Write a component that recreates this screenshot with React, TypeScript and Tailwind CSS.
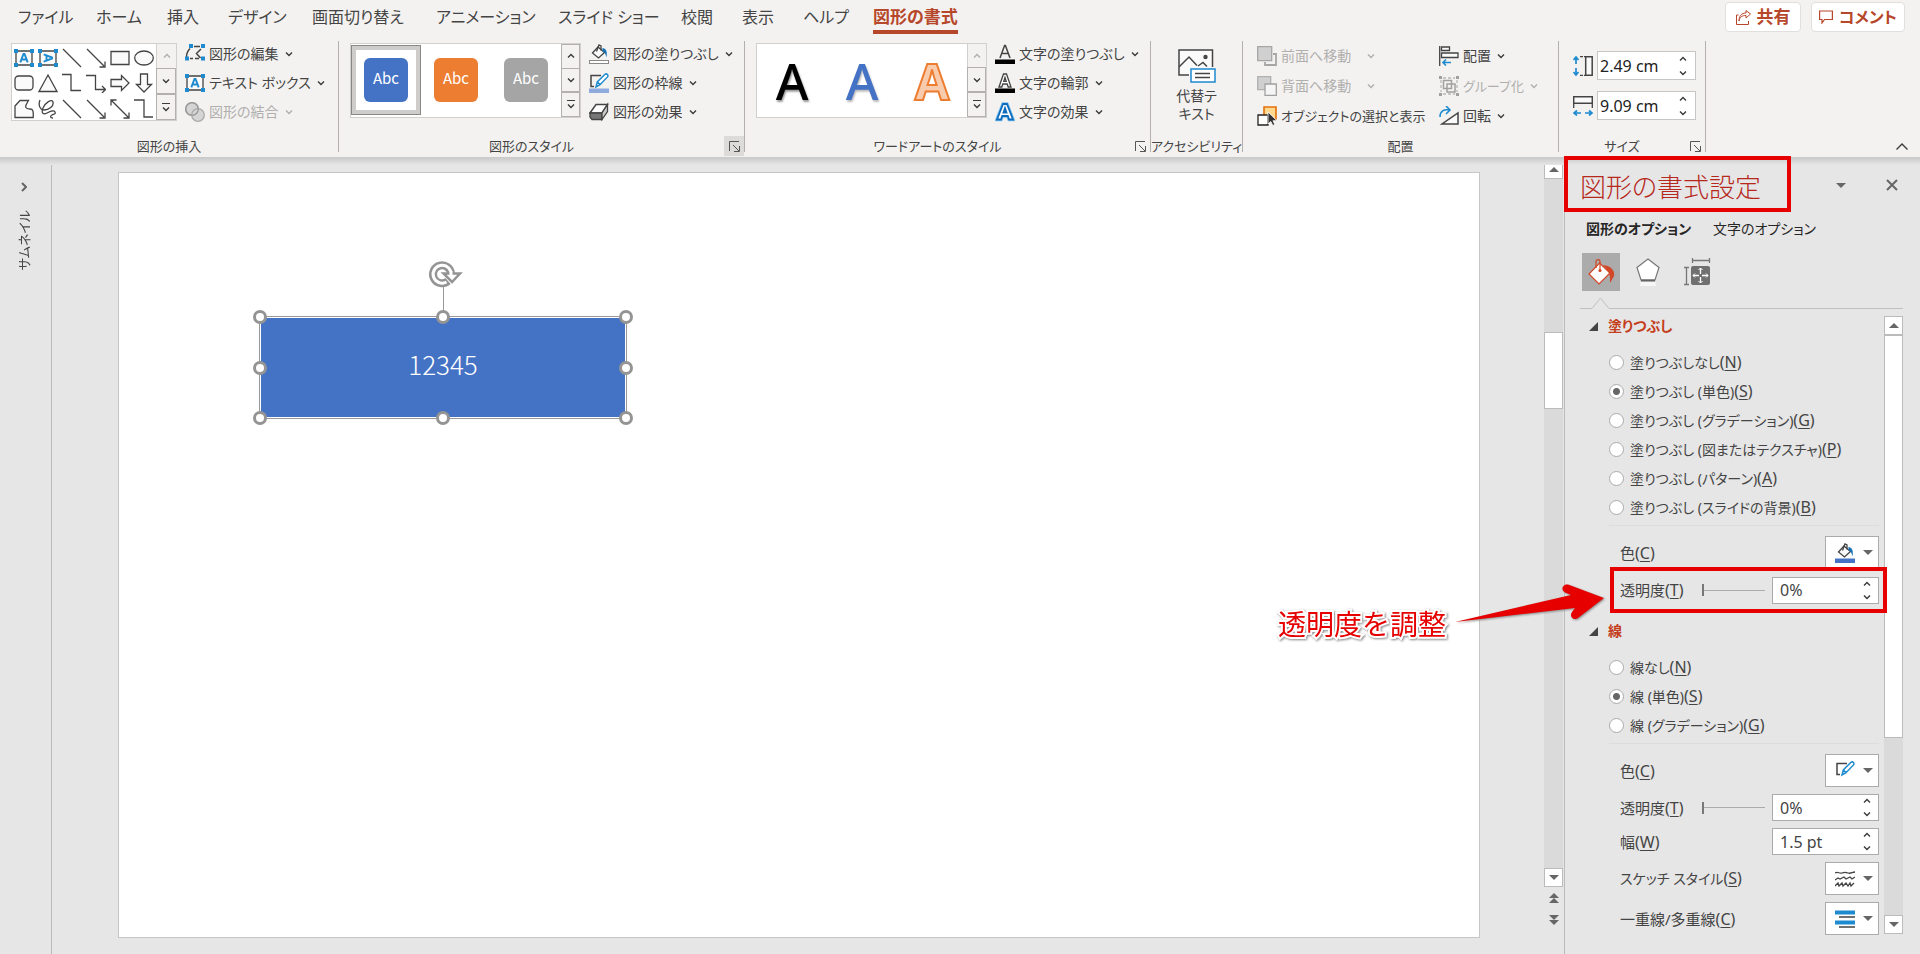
import { useState, type ReactNode } from "react";
import clsx from "clsx";

const TABS = [
  { label: "ファイル", width: "w-[78px]" },
  { label: "ホーム", width: "w-[71px]" },
  { label: "挿入", width: "w-[61px]" },
  { label: "デザイン", width: "w-[84px]" },
  { label: "画面切り替え", width: "w-[124px]" },
  { label: "アニメーション", width: "w-[122px]" },
  { label: "スライド ショー", width: "w-[123px]" },
  { label: "校閲", width: "w-[61px]" },
  { label: "表示", width: "w-[61px]" },
  { label: "ヘルプ", width: "w-[70px]" },
];

const FILL_OPTIONS = [
  { label: "塗りつぶしなし", accessKey: "N" },
  { label: "塗りつぶし (単色)", accessKey: "S" },
  { label: "塗りつぶし (グラデーション)", accessKey: "G" },
  { label: "塗りつぶし (図またはテクスチャ)", accessKey: "P" },
  { label: "塗りつぶし (パターン)", accessKey: "A" },
  { label: "塗りつぶし (スライドの背景)", accessKey: "B" },
];

const LINE_OPTIONS = [
  { label: "線なし", accessKey: "N" },
  { label: "線 (単色)", accessKey: "S" },
  { label: "線 (グラデーション)", accessKey: "G" },
];

/* ---------- icons ---------- */

function Svg({ size = 20, children }: { size?: number; children: ReactNode }) {
  return (
    <svg
      width={size}
      height={size}
      viewBox="0 0 20 20"
      fill="none"
      stroke="#444"
      strokeWidth="1.3"
      className="shrink-0"
      aria-hidden="true"
    >
      {children}
    </svg>
  );
}

function Chevron({ up, dim }: { up?: boolean; dim?: boolean }) {
  return (
    <svg
      width="8"
      height="6"
      viewBox="0 0 8 6"
      fill="none"
      stroke={dim ? "#b1afad" : "#3b3a39"}
      strokeWidth="1.4"
      className="shrink-0"
      aria-hidden="true"
    >
      <path d={up ? "M1 4.5l3-3 3 3" : "M1 1.5l3 3 3-3"} />
    </svg>
  );
}

function Triangle({ up }: { up?: boolean }) {
  return (
    <svg width="10" height="5" viewBox="0 0 10 5" fill="#666" aria-hidden="true">
      <path d={up ? "M0 5l5-5 5 5z" : "M0 0h10L5 5z"} />
    </svg>
  );
}

function TextBoxIcon({ vertical }: { vertical?: boolean }) {
  return (
    <Svg>
      <path d="M2 3h16v14H2z" fill="#fafafa" />
      <g stroke="none" fill="#1e8bd0">
        <path d="M0 1h4v4H0zM16 1h4v4h-4zM0 15h4v4H0zM16 15h4v4h-4z" />
      </g>
      <g transform={vertical ? "rotate(90 10 10)" : undefined} stroke="#1e8bd0" strokeWidth="1.9">
        <path d="M6.3 14.3L9.5 6h1l3.2 8.3M7.6 11.5h4.8" />
      </g>
    </Svg>
  );
}

function EditPointsIcon() {
  return (
    <Svg>
      <path d="M1.5 13C1.500 9 2.500 7 5 4.500M9 2.500h6M16 5l-4.500 4.500L15.500 14M5 14.500h3M10 14.500h4" strokeWidth="1.500" />
      <path d="M4 0h4v4H4zM16 0h4v4h-4zM0 12.500h4v4H0zM16 12.500h4v4h-4z" fill="#1e8bd0" stroke="none" />
    </Svg>
  );
}

function MergeIcon() {
  return (
    <Svg>
      <circle cx="7" cy="7" r="6.3" stroke="#aaa" fill="#d5d5d5" />
      <circle cx="13" cy="13" r="6.3" stroke="#aaa" fill="#d5d5d5" />
      <circle cx="7" cy="7" r="6.3" stroke="#999" />
    </Svg>
  );
}

function BucketIcon({ color }: { color: string }) {
  return (
    <Svg>
      <path d="M9 3l6.5 5.5-6 5.5-6-5z" fill="#fafafa" />
      <path d="M7.5 7.5L10 1l2 1v4.5" />
      <path d="M13.500 4c4 .5 5 4 4 9.500-1-4-2-6-4-6z" fill="#1673b8" stroke="none" />
      <rect
        x={color === "white" ? 0.5 : 0}
        y={color === "white" ? 16.5 : 15.5}
        width={color === "white" ? 19 : 20}
        height={color === "white" ? 3 : 4.5}
        fill={color}
        stroke={color === "white" ? "#8a8886" : "none"}
        strokeWidth="1"
      />
    </Svg>
  );
}

function PenIcon({ color }: { color?: string }) {
  return (
    <Svg>
      <path d="M12 2.500H2v11h3" strokeWidth="1.500" />
      <path d="M7 14l1.300-5L16 1.300c1.800-1.200 3.700.8 2.500 2.600L11 11.700zM8.500 9l2.800 2.800" stroke="#1e8bd0" strokeWidth="1.500" fill="#fff" />
      {color && <path d="M0 15.500h20v4.500H0z" fill={color} stroke="none" />}
    </Svg>
  );
}

function EffectsIcon() {
  return (
    <Svg>
      <path d="M7 2.500h11.500L13 11H1z" fill="#fff" strokeWidth="1.500" />
      <path d="M1 11h12v6.500H3L1 15z" fill="#777" />
      <path d="M18.500 2.500v7l-5.500 8V11z" fill="#ccc" />
    </Svg>
  );
}

function LetterIcon({ kind }: { kind: "fill" | "outline" | "effect" }) {
  if (kind === "effect") {
    return (
      <Svg>
        <path d="M2 17.500L8 2h4l6 15.500h-4l-1.200-3.500H7.200L6 17.500zM8.500 10.500h3L10 6z" stroke="#83c3ee" strokeWidth="3.500" />
        <path d="M2 17.500L8 2h4l6 15.500h-4l-1.200-3.500H7.200L6 17.500zM8.500 10.500h3L10 6z" fill="#fff" stroke="#0f6cbd" strokeWidth="1.800" />
      </Svg>
    );
  }
  return (
    <Svg>
      {kind === "fill" ? (
        <path d="M5 14L9.600 1.500h.8L15 14M6.800 9.500h6.400" strokeWidth="1.500" />
      ) : (
        <path d="M4 14L8.500 1h3L16 14h-2.800l-1-3H7.800l-1 3zM8.800 8.300h2.400L10 4.500z" strokeWidth="1.300" fill="#fff" />
      )}
      <path d="M0 15.500h20v4.500H0z" fill="#000" stroke="none" />
    </Svg>
  );
}

function AltTextIcon() {
  return (
    <svg width="38" height="34" viewBox="0 0 38 34" fill="none" stroke="#444" strokeWidth="1.500" aria-hidden="true">
      <path d="M34.500 18V1H1v25h10" fill="#fafafa" />
      <path d="M1 18L11 8l8 8.500M20 17l5-3.500 4 4" />
      <circle cx="27.500" cy="8" r="2.200" fill="#444" stroke="none" />
      <path d="M13 20h24v13H13z" fill="#fff" stroke="#1e8bd0" />
      <path d="M17 24.500h15M17 28.500h15" strokeWidth="1.300" />
    </svg>
  );
}

function ForwardIcon() {
  return (
    <Svg>
      <path d="M16 8h3v11H8v-3" stroke="#a6a6a6" strokeWidth="1.800" />
      <path d="M.7.7h14v14H.7z" fill="#d0d0d0" stroke="#a6a6a6" />
    </Svg>
  );
}

function BackwardIcon() {
  return (
    <Svg>
      <path d="M.7.7h13v13H.7z" fill="#d0d0d0" stroke="#b0b0b0" />
      <path d="M8 8h11.300v11.300H8z" fill="#f5f5f5" stroke="#a0a0a0" />
    </Svg>
  );
}

function SelectionIcon() {
  return (
    <Svg>
      <path d="M7 1h12v12H7z" fill="#ffd890" stroke="#e2710a" strokeWidth="1.600" />
      <path d="M1 9h10v10H1z" fill="#fff" stroke="#222" />
      <path d="M11 6v12l2.800-2.500 2 4 2-1-1.800-3.800H20z" fill="#333" stroke="#fff" strokeWidth=".8" />
    </Svg>
  );
}

function AlignIcon() {
  return (
    <Svg>
      <path d="M.7 0v20" />
      <path d="M2.500 1h8v3.500h-8zM2.500 7h16.500v4.500H2.500z" fill="#fafafa" />
      <path d="M12 16.500H4M7 13.500l-3 3 3 3" stroke="#1e8bd0" strokeWidth="1.600" />
    </Svg>
  );
}

function GroupIcon() {
  return (
    <Svg>
      <path d="M2 4v12M18 4v12M4 2h12M4 18h12" stroke="#b8b8b8" strokeDasharray="3 2" />
      <path d="M4.500 4.500h8v8h-8zM8 8h8v8H8z" stroke="#a0a0a0" strokeWidth="1.500" />
      <path d="M0 0h3v3H0zM17 0h3v3h-3zM0 17h3v3H0zM17 17h3v3h-3z" fill="#a0a0a0" stroke="none" />
    </Svg>
  );
}

function RotateIcon() {
  return (
    <Svg>
      <path d="M1 11c0-6 4-8 9-7M7 0l4 4-4 4" stroke="#1e8bd0" strokeWidth="1.600" />
      <path d="M19 7v11H3z" fill="#fafafa" strokeWidth="1.500" />
    </Svg>
  );
}

function HeightIcon() {
  return (
    <Svg>
      <path d="M7 .700h5M7 19.300h5" strokeDasharray="3 1" />
      <path d="M12.700.700h6.500v18.600h-6.500z" fill="#fafafa" strokeWidth="1.500" />
      <path d="M3 1v7M3 12v7M.500 4L3 1l2.500 3M.500 16L3 19l2.500-3" stroke="#1e8bd0" strokeWidth="1.700" />
    </Svg>
  );
}

function WidthIcon() {
  return (
    <Svg>
      <path d="M.700.700h18.600v6.500H.700z" fill="#fafafa" strokeWidth="1.500" />
      <path d="M.700 8v4M19.300 8v4" />
      <path d="M1 17h7M12 17h7M4 14.500L1 17l3 2.500M16 14.500l3 2.500-3 2.500" stroke="#1e8bd0" strokeWidth="1.700" />
    </Svg>
  );
}

function LauncherIcon() {
  return (
    <svg width="11" height="11" viewBox="0 0 11 11" fill="none" stroke="#555" aria-hidden="true">
      <path d="M10 .500H.500V10M4 4l6 6M10.500 5v5.500H5" />
    </svg>
  );
}

// The 18 entries of the shapes gallery, row by row.
const SHAPES: ReactNode[] = [
  <TextBoxIcon />,
  <TextBoxIcon vertical />,
  <Svg><path d="M1 1l18 18" /></Svg>,
  <Svg><path d="M1 1l17 17M19 13.500V19h-5.500" /></Svg>,
  <Svg><path d="M1 3.500h18v13H1z" fill="#fafafa" /></Svg>,
  <Svg><ellipse cx="10" cy="10" rx="9.300" ry="7" fill="#fafafa" /></Svg>,
  <Svg><rect x="1" y="3" width="18" height="14" rx="3.500" fill="#fafafa" /></Svg>,
  <Svg><path d="M10 2l9 16.500H1z" fill="#fafafa" /></Svg>,
  <Svg><path d="M0 1.500h9v16h10" /></Svg>,
  <Svg><path d="M0 2.500h9.500v14H19M16 13l3.500 3.500L16 20" /></Svg>,
  <Svg><path d="M1 6.500h10.500v-4L19 10l-7.500 7.500v-4H1z" fill="#fafafa" /></Svg>,
  <Svg><path d="M6.500 1v10.500h-4L10 19l7.500-7.500h-4V1z" fill="#fafafa" /></Svg>,
  <Svg><path d="M1 7l5-5.500h8.500L12 6c-1 3 1 4 4 4s3.500 2 3.200 8.500H1z" fill="#fafafa" /></Svg>,
  <Svg><path d="M2 1C0 6 2 11 6 11c5 0 10-4 9-8s-8 1-10 6 0 7 4 5 7-3 8-1-1 2-3 3-2 3 1 3" /></Svg>,
  <Svg><path d="M1 1l18 18" /></Svg>,
  <Svg><path d="M1 1l17 17M19 13.500V19h-5.500" /></Svg>,
  <Svg><path d="M1 1l18 18M19 13.500V19h-5.500M1 6.500V1h5.500" /></Svg>,
  <Svg><path d="M0 1h10v17h9" /></Svg>,
];

/* ---------- ribbon ---------- */

function RibbonGroup({
  label,
  width,
  launcher,
  active,
  children,
}: {
  label: string;
  width: string;
  launcher?: boolean;
  active?: boolean;
  children: ReactNode;
}) {
  return (
    <section
      aria-label={label}
      className={clsx("flex h-[111px] shrink-0 flex-col border-r border-[#b3b0ad]", width)}
    >
      <div className="flex flex-1">{children}</div>
      <div className="flex h-3 items-center">
        <span className="flex-1 whitespace-nowrap text-center text-[13px]">{label}</span>
        {launcher && (
          <button
            type="button"
            aria-label={`${label}の詳細`}
            className={clsx("flex size-5 items-center justify-center", active && "bg-[#dcdbda]")}
          >
            <LauncherIcon />
          </button>
        )}
      </div>
    </section>
  );
}

function RibbonButton({
  icon,
  label,
  disabled,
  menu = true,
  wide,
  tall,
  small,
}: {
  icon: ReactNode;
  label: string;
  disabled?: boolean;
  menu?: boolean;
  wide?: boolean;
  tall?: boolean;
  small?: boolean;
}) {
  return (
    <button
      type="button"
      disabled={disabled}
      className={clsx(
        "flex items-center gap-1 whitespace-nowrap disabled:text-[#b1afad]",
        tall ? "h-[30px]" : "h-[29px]",
        small ? "text-[13px]" : "text-sm",
      )}
    >
      {icon}
      <span>{label}</span>
      {menu && (
        <span className={wide ? "ml-3" : "ml-0.5"}>
          <Chevron dim={disabled} />
        </span>
      )}
    </button>
  );
}

function GalleryScroll({ topDim }: { topDim?: boolean }) {
  const cell = "flex flex-1 items-center justify-center border-[#b3b0ad] bg-[#f3f2f1]";
  return (
    <div className="flex w-5 flex-col">
      <button
        type="button"
        aria-label="前の行"
        className={clsx(cell, "border-l", topDim ? "border-[#d2d0ce]" : "border-r border-t")}
      >
        <Chevron up dim={topDim} />
      </button>
      <button type="button" aria-label="次の行" className={clsx(cell, "border")}>
        <Chevron />
      </button>
      <button type="button" aria-label="その他" className={clsx(cell, "flex-col gap-0.5 border")}>
        <span className="h-px w-2 bg-[#3b3a39]" />
        <Chevron />
      </button>
    </div>
  );
}

function StyleSwatch({ color, selected }: { color: string; selected?: boolean }) {
  return (
    <button
      type="button"
      aria-pressed={!!selected}
      className={clsx(
        "flex h-[70px] w-[70px] items-center justify-center",
        selected && "border border-[#8a8886] bg-white ring-4 ring-inset ring-[#cfcdcb]",
      )}
    >
      <span
        className={clsx(
          "flex size-11 items-center justify-center rounded-md pb-1 font-['Noto_Sans_CJK_JP','Noto_Sans',sans-serif] text-[15px] text-white",
          color,
        )}
      >
        Abc
      </span>
    </button>
  );
}

function SizeField({ icon, label, value }: { icon: ReactNode; label: string; value: string }) {
  return (
    <div className="flex items-center gap-1">
      {icon}
      <span className="flex h-[29px] w-[99px] items-center border border-[#c8c6c4] bg-white pr-2">
        <input
          aria-label={label}
          defaultValue={value}
          className="w-full min-w-0 pl-0.5 text-base text-[#222] outline-none"
        />
        <span className="flex flex-col gap-2">
          <Chevron up />
          <Chevron />
        </span>
      </span>
    </div>
  );
}

function Ribbon() {
  return (
    <header className="bg-[#f3f2f1]">
      <div className="flex h-9 items-start justify-between pr-[15px]">
        <nav className="flex pl-[18px] text-base leading-[34px]">
          {TABS.map((t) => (
            <button key={t.label} type="button" className={clsx("shrink-0 whitespace-nowrap text-left", t.width)}>
              {t.label}
            </button>
          ))}
          <button
            type="button"
            aria-current="page"
            className="h-[34px] shrink-0 border-b-4 border-[#b7472a] text-[17px] font-bold text-[#b7472a]"
          >
            図形の書式
          </button>
        </nav>
        <div className="flex gap-2.5 pt-0.5 text-[17px] font-bold text-[#b7472a]">
          <button type="button" className="flex h-[30px] w-[76px] items-center justify-center gap-1.5 rounded border border-[#e1dfdd] bg-white">
            <svg width="15" height="15" viewBox="0 0 15 15" fill="none" stroke="#b7472a" aria-hidden="true">
              <path d="M2.500 5H.500v9.500h12V11M3 11c.5-4 3-5.500 7-5.500V8l4.500-4L10 .500V3C5.500 3 3 6 3 11z" />
            </svg>
            共有
          </button>
          <button type="button" className="flex h-[30px] w-[94px] items-center justify-center gap-1.5 whitespace-nowrap rounded border border-[#e1dfdd] bg-white text-base">
            <svg width="14" height="14" viewBox="0 0 14 14" fill="none" stroke="#b7472a" strokeWidth="1.200" aria-hidden="true">
              <path d="M.600 1h12.800v8.500H5.500L3 13V9.500H.600z" />
            </svg>
            コメント
          </button>
        </div>
      </div>

      <div className="flex items-start pb-[5px] pt-[5px]">
        <RibbonGroup label="図形の挿入" width="w-[339px]">
          <div className="ml-[11px] mt-0.5 flex h-[78px] border border-[#d2d0ce] bg-white">
            <div className="grid grid-cols-6 gap-x-1 gap-y-1 px-0.5 pt-1">
              {SHAPES.map((shape, i) => (
                <button key={i} type="button" aria-label={`図形 ${i + 1}`} className="size-5">
                  {shape}
                </button>
              ))}
            </div>
            <GalleryScroll topDim />
          </div>
          <div className="-mt-0.5 ml-2 flex flex-col">
            <RibbonButton icon={<EditPointsIcon />} label="図形の編集" />
            <RibbonButton icon={<TextBoxIcon />} label="テキスト ボックス" />
            <RibbonButton icon={<MergeIcon />} label="図形の結合" disabled />
          </div>
        </RibbonGroup>

        <RibbonGroup label="図形のスタイル" width="w-[406px]" launcher active>
          <div className="ml-[11px] mt-0.5 flex h-[75px] w-[231px] justify-between border border-[#d2d0ce] bg-white">
            <div className="flex pt-px">
              <StyleSwatch color="bg-[#4472c4]" selected />
              <StyleSwatch color="bg-[#ed7d31]" />
              <StyleSwatch color="bg-[#a5a5a5]" />
            </div>
            <GalleryScroll />
          </div>
          <div className="-mt-0.5 ml-2 flex flex-col">
            <RibbonButton icon={<BucketIcon color="white" />} label="図形の塗りつぶし" />
            <RibbonButton icon={<PenIcon color="#8faadc" />} label="図形の枠線" />
            <RibbonButton icon={<EffectsIcon />} label="図形の効果" />
          </div>
        </RibbonGroup>

        <RibbonGroup label="ワードアートのスタイル" width="w-[406px]" launcher>
          <div className="ml-[11px] mt-0.5 flex h-[75px] w-[231px] justify-between border border-[#d2d0ce] bg-white">
            <div className="flex items-center font-['Noto_Sans',sans-serif] text-[50px] font-medium leading-none">
              <button type="button" className="w-[70px] text-black [text-shadow:1px_2px_2px_#999]">A</button>
              <button type="button" className="w-[70px] text-[#4472c4] [text-shadow:1px_2px_2px_#bbb]">A</button>
              <button type="button" className="w-[70px] font-bold text-[#f8cbad] [-webkit-text-stroke:2px_#ed7d31]">A</button>
            </div>
            <GalleryScroll topDim />
          </div>
          <div className="-mt-0.5 ml-2 flex flex-col">
            <RibbonButton icon={<LetterIcon kind="fill" />} label="文字の塗りつぶし" />
            <RibbonButton icon={<LetterIcon kind="outline" />} label="文字の輪郭" />
            <RibbonButton icon={<LetterIcon kind="effect" />} label="文字の効果" />
          </div>
        </RibbonGroup>

        <RibbonGroup label="アクセシビリティ" width="w-[92px]">
          <button type="button" className="flex w-full flex-col items-center gap-1 pt-2 text-sm leading-[18px]">
            <AltTextIcon />
            <span>
              代替テ
              <br />
              キスト
            </span>
          </button>
        </RibbonGroup>

        <RibbonGroup label="配置" width="w-[316px]">
          <div className="ml-3.5 flex w-[182px] flex-col">
            <RibbonButton tall wide icon={<ForwardIcon />} label="前面へ移動" disabled />
            <RibbonButton tall wide icon={<BackwardIcon />} label="背面へ移動" disabled />
            <RibbonButton tall small icon={<SelectionIcon />} label="オブジェクトの選択と表示" menu={false} />
          </div>
          <div className="flex flex-col">
            <RibbonButton tall icon={<AlignIcon />} label="配置" />
            <RibbonButton tall small icon={<GroupIcon />} label="グループ化" disabled />
            <RibbonButton tall icon={<RotateIcon />} label="回転" />
          </div>
        </RibbonGroup>

        <RibbonGroup label="サイズ" width="w-[147px]" launcher>
          <div className="ml-3.5 flex flex-col gap-[11px] pt-2.5">
            <SizeField icon={<HeightIcon />} label="高さ" value="2.49 cm" />
            <SizeField icon={<WidthIcon />} label="幅" value="9.09 cm" />
          </div>
        </RibbonGroup>

        <button type="button" aria-label="リボンを折りたたむ" className="mb-0.5 ml-auto mr-3 self-end">
          <svg width="12" height="7" viewBox="0 0 12 7" fill="none" stroke="#3b3a39" strokeWidth="1.400" aria-hidden="true">
            <path d="M.500 6.500L6 1l5.500 5.500" />
          </svg>
        </button>
      </div>
    </header>
  );
}

/* ---------- slide ---------- */

const HANDLES = [
  "left-0 top-0",
  "left-1/2 top-0",
  "left-full top-0",
  "left-0 top-1/2",
  "left-full top-1/2",
  "left-0 top-full",
  "left-1/2 top-full",
  "left-full top-full",
];

function Slide() {
  return (
    <div className="relative aspect-video w-full border border-[#c6c6c6] bg-white">
      <div className="absolute left-[140px] top-[143px] h-[103px] w-[368px] border border-[#999] p-px">
        <div className="flex size-full items-center justify-center bg-[#4472c4] pb-2 font-['Noto_Sans_CJK_JP',sans-serif] text-[26px] font-light text-white">
          12345
        </div>
        <span className="absolute bottom-full left-1/2 h-8 w-px bg-[#999]" />
        <svg
          width="38"
          height="34"
          viewBox="0 0 38 34"
          fill="none"
          className="absolute -top-[60px] left-[165px]"
          aria-hidden="true"
        >
          <path d="M23 24A9 9 0 1 1 26 17" stroke="#949494" strokeWidth="8" />
          <path d="M21.500 25A9 9 0 1 1 26 18.500" stroke="#fff" strokeWidth="3" />
          <path d="M18.500 16.500H35L27 25z" fill="#fff" stroke="#949494" strokeWidth="2.500" />
          <path d="M24.500 14h3v5h-3z" fill="#fff" />
        </svg>
        {HANDLES.map((pos) => (
          <span
            key={pos}
            className={clsx(
              "absolute size-3.5 -translate-x-1/2 -translate-y-1/2 rounded-full border-[3px] border-[#949494] bg-white",
              pos,
            )}
          />
        ))}
      </div>
    </div>
  );
}

function ScrollButton({ up }: { up?: boolean }) {
  return (
    <button
      type="button"
      aria-label={up ? "上へスクロール" : "下へスクロール"}
      className="flex size-[19px] shrink-0 items-center justify-center border border-[#bbb] bg-white"
    >
      <Triangle up={up} />
    </button>
  );
}

/* ---------- format pane ---------- */

function AccessLabel({ text, accessKey }: { text: string; accessKey: string }) {
  return (
    <>
      {text}
      <span className="text-base leading-5 [font-feature-settings:normal]">
        (<u className="underline-offset-2">{accessKey}</u>)
      </span>
    </>
  );
}

function RadioList({
  name,
  options,
  initial,
}: {
  name: string;
  options: { label: string; accessKey: string }[];
  initial: string;
}) {
  const [value, setValue] = useState(initial);
  return (
    <div className="ml-[26px] border-b border-[#dcdcdc] pb-[3px]">
      {options.map((o) => (
        <label key={o.accessKey} className="flex h-[29px] items-center gap-1.5 whitespace-nowrap text-sm">
          <input
            type="radio"
            name={name}
            checked={value === o.accessKey}
            onChange={() => setValue(o.accessKey)}
            className="size-[15px] shrink-0 appearance-none rounded-full border border-[#ababab] bg-white checked:bg-[radial-gradient(circle,#666_3px,#fff_4px)]"
          />
          <span>
            <AccessLabel text={o.label} accessKey={o.accessKey} />
          </span>
        </label>
      ))}
    </div>
  );
}

function SectionTitle({ children }: { children: ReactNode }) {
  return (
    <button type="button" className="flex h-6 items-center gap-2.5 pl-1.5 text-sm font-bold text-[#c43e1c]">
      <svg width="9" height="9" viewBox="0 0 9 9" fill="#444" aria-hidden="true">
        <path d="M9 0v9H0z" />
      </svg>
      {children}
    </button>
  );
}

function Row({ height, children }: { height: string; children: ReactNode }) {
  return <div className={clsx("relative ml-[37px] flex items-center", height)}>{children}</div>;
}

function MenuButton({ label, children }: { label: string; children: ReactNode }) {
  return (
    <button
      type="button"
      aria-label={label}
      className="ml-auto flex h-[33px] w-[54px] items-center justify-end gap-2 border border-[#ababab] bg-white pr-[5px]"
    >
      {children}
      <Triangle />
    </button>
  );
}

function SpinBox({ id, value }: { id: string; value: string }) {
  return (
    <span className="ml-auto flex h-[27px] w-[107px] shrink-0 items-center border border-[#ababab] bg-white pr-[7px]">
      <input id={id} defaultValue={value} className="w-full min-w-0 pl-[7px] text-base leading-5 outline-none" />
      <span className="flex flex-col gap-[7px]">
        <Chevron up />
        <Chevron />
      </span>
    </span>
  );
}

function TransparencySlider({ label }: { label: string }) {
  return (
    <input
      type="range"
      aria-label={label}
      defaultValue={0}
      className="ml-[18px] h-3 w-[63px] appearance-none bg-[linear-gradient(#ababab,#ababab)] bg-[length:100%_1px] bg-center bg-no-repeat [&::-webkit-slider-thumb]:h-3 [&::-webkit-slider-thumb]:w-0.5 [&::-webkit-slider-thumb]:appearance-none [&::-webkit-slider-thumb]:bg-[#777]"
    />
  );
}

function Callout() {
  return (
    <div className="pointer-events-none absolute -left-[10px] -right-2 -inset-y-[5px] border-4 border-[#e60000]">
      <div className="absolute right-full top-0 mr-2.5 flex items-start gap-2">
        <span className="mt-9 whitespace-nowrap font-['Noto_Sans_CJK_JP',sans-serif] text-[28px] leading-8 text-[#e60000] [font-feature-settings:normal] [paint-order:stroke_fill] [-webkit-text-stroke:4px_white] [filter:drop-shadow(1px_1px_1px_#888)]">
          透明度を調整
        </span>
        <svg
          width="150"
          height="60"
          viewBox="0 0 150 60"
          className="mt-3 shrink-0 [filter:drop-shadow(1px_1px_1px_#888)]"
          aria-hidden="true"
        >
          <path
            d="M1 39L117 12l-6-2.500c-5-3-2-9 3-8L150 15l-26 20c-5 3-9-2-6-6l3-4z"
            fill="#e60000"
          />
        </svg>
      </div>
    </div>
  );
}

function FormatPane() {
  return (
    <aside className="flex w-[356px] shrink-0 flex-col border-l border-[#bbb] pr-[17px]">
      <div className="flex items-start justify-between">
        <h2 className="relative z-10 -ml-px -mt-px flex h-14 w-[227px] items-center whitespace-nowrap border-4 border-[#e60000] pl-3 pt-1 font-['Noto_Sans_CJK_JP',sans-serif] text-[26px] font-light text-[#b7281c]">
          図形の書式設定
        </h2>
        <div className="flex items-center gap-10 pt-[22px]">
          <button type="button" aria-label="作業ウィンドウ オプション">
            <Triangle />
          </button>
          <button type="button" aria-label="閉じる" className="pr-[5px]">
            <svg width="12" height="12" viewBox="0 0 12 12" stroke="#666" strokeWidth="2" aria-hidden="true">
              <path d="M1 1l10 10M11 1L1 11" />
            </svg>
          </button>
        </div>
      </div>

      <div role="tablist" className="flex h-6 items-center pl-[21px] pt-2.5 text-sm text-[#262626]">
        <button type="button" role="tab" aria-selected="true" className="w-[127px] whitespace-nowrap text-left font-bold">
          図形のオプション
        </button>
        <button type="button" role="tab" aria-selected="false" className="whitespace-nowrap">
          文字のオプション
        </button>
      </div>

      <div className="mt-[17px] flex items-center pl-[17px]">
        <button type="button" aria-label="塗りつぶしと線" className="flex size-[38px] items-center justify-center bg-[#ababab]">
          <svg width="28" height="28" viewBox="0 0 28 28" fill="none" stroke="#d24726" strokeWidth="1.200" aria-hidden="true">
            <path d="M12.500 5L23 15 12 26 2 16z" fill="#fff" />
            <path d="M9 10V3.500C9 1 13 1 13 3.500V12" />
            <circle cx="13" cy="12.500" r="1" fill="#d24726" />
            <path d="M16 7c8 1 12 5 11 11l-4 7c0-7 1-10-7-18z" fill="#d24726" stroke="none" />
          </svg>
        </button>
        <button type="button" aria-label="効果" className="ml-4">
          <svg width="24" height="28" viewBox="0 0 24 28" fill="none" aria-hidden="true">
            <path d="M12 1l11 8.500L19 22H5L1 9.500z" fill="#fff" stroke="#777" strokeWidth="1.200" />
            <path d="M5 22.500h14" stroke="#666" strokeWidth="2" />
            <path d="M5 24h14l1.500 4h-17z" fill="#f6f6f6" />
          </svg>
        </button>
        <button type="button" aria-label="サイズとプロパティ" className="ml-[23px]">
          <svg width="28" height="28" viewBox="0 0 28 28" fill="none" stroke="#777" aria-hidden="true">
            <path d="M9.500 0v5M26.500 0v5M9 2.500h18M1 9.500h5M1 26.500h5M3.500 9v18" strokeWidth="1.300" />
            <rect x="8" y="8" width="19" height="19" rx="2" fill="#707070" stroke="none" />
            <path d="M10 17.500h15M17.500 10v15" stroke="#fff" strokeDasharray="6 3" strokeWidth="1.300" />
            <path d="M12 15.500l-2 2 2 2M23 15.500l2 2-2 2M15.500 12l2-2 2 2M15.500 23l2 2 2-2" stroke="#fff" />
          </svg>
        </button>
      </div>

      <div className="ml-[15px] mt-1.5 flex h-3 items-end">
        <span className="h-px w-3 bg-[#c0c0c0]" />
        <svg width="17" height="12" viewBox="0 0 17 12" fill="none" stroke="#c0c0c0" aria-hidden="true">
          <path d="M0 11.500L8.500 1 17 11.500" />
        </svg>
        <span className="h-px flex-1 bg-[#c0c0c0]" />
      </div>

      <div className="flex flex-1 gap-[5px] pl-[18px] pt-[5px]">
        <div className="min-w-0 flex-1">
          <SectionTitle>塗りつぶし</SectionTitle>
          <div className="h-2.5" />
          <RadioList name="fill" options={FILL_OPTIONS} initial="S" />
          <div className="pt-2.5">
            <Row height="h-[33px]">
              <span>
                <AccessLabel text="色" accessKey="C" />
              </span>
              <MenuButton label="塗りつぶしの色">
                <BucketIcon color="#4472c4" />
              </MenuButton>
            </Row>
            <div className="h-[3px]" />
            <Row height="h-9">
              <label htmlFor="fill-transparency" className="whitespace-nowrap">
                <AccessLabel text="透明度" accessKey="T" />
              </label>
              <TransparencySlider label="塗りつぶしの透明度" />
              <SpinBox id="fill-transparency" value="0%" />
              <Callout />
            </Row>
          </div>

          <div className="h-[11px]" />
          <SectionTitle>線</SectionTitle>
          <div className="h-2.5" />
          <RadioList name="line" options={LINE_OPTIONS} initial="S" />
          <div className="flex flex-col gap-[7px] pt-2.5">
            <Row height="h-[33px]">
              <span>
                <AccessLabel text="色" accessKey="C" />
              </span>
              <MenuButton label="線の色">
                <PenIcon />
              </MenuButton>
            </Row>
            <Row height="h-[27px]">
              <label htmlFor="line-transparency" className="whitespace-nowrap">
                <AccessLabel text="透明度" accessKey="T" />
              </label>
              <TransparencySlider label="線の透明度" />
              <SpinBox id="line-transparency" value="0%" />
            </Row>
            <Row height="h-[27px]">
              <label htmlFor="line-width">
                <AccessLabel text="幅" accessKey="W" />
              </label>
              <SpinBox id="line-width" value="1.5 pt" />
            </Row>
            <Row height="h-[33px]">
              <span className="text-sm">
                <AccessLabel text="スケッチ スタイル" accessKey="S" />
              </span>
              <MenuButton label="スケッチ スタイル">
                <Svg>
                  <path d="M0 4c3-2 4 1 7 0s3-1 6 0 4-1 7-1M0 11l3-2 2 1 4-2 2 2 4-2 2 2 3-2M0 17l3-3 1 3 3-3 1 3 3-3 2 3 2-3 1 3 3-3" />
                </Svg>
              </MenuButton>
            </Row>
            <Row height="h-[33px]">
              <span>
                <AccessLabel text="一重線/多重線" accessKey="C" />
              </span>
              <MenuButton label="一重線/多重線">
                <Svg>
                  <path d="M0 3.500h20M0 13.500h20" stroke="#1e8bd0" strokeWidth="4" />
                  <path d="M4 8h16M4 18h16" strokeWidth="1.500" />
                </Svg>
              </MenuButton>
            </Row>
          </div>
        </div>

        <div className="mb-5 mt-0.5 flex w-[19px] flex-col bg-[#dadada]">
          <ScrollButton up />
          <div className="h-[403px] border border-[#bbb] bg-white" />
          <div className="mt-auto">
            <ScrollButton />
          </div>
        </div>
      </div>
    </aside>
  );
}

export default function App() {
  return (
    <div className="flex min-h-screen flex-col bg-[#e6e6e6] font-['Noto_Sans','Noto_Sans_CJK_JP',sans-serif] text-[15px] leading-5 text-[#444] [font-feature-settings:'palt']">
      <Ribbon />
      <main className="relative flex flex-1">
        <div className="pointer-events-none absolute inset-x-0 top-0 h-2 bg-linear-to-b from-[#c8c8c8] to-[#e6e6e6]" />

        <div className="mt-1 flex w-[52px] shrink-0 flex-col items-center gap-[18px] border-r border-[#bbb] pr-1 pt-[21px]">
          <button type="button" aria-label="サムネイルを展開">
            <svg width="6" height="10" viewBox="0 0 6 10" fill="none" stroke="#666" strokeWidth="2" aria-hidden="true">
              <path d="M1 1l4 4-4 4" />
            </svg>
          </button>
          <span className="rotate-180 whitespace-nowrap text-[13px] leading-5 [text-orientation:sideways] [writing-mode:vertical-rl]">
            サムネイル
          </span>
        </div>

        <div className="min-w-0 flex-1 pb-4 pl-[66px] pr-16 pt-[15px]">
          <Slide />
        </div>

        <div className="flex w-5 shrink-0 flex-col items-start pt-[3px]">
          <div className="flex h-[727px] w-[19px] flex-col bg-[#dadada]">
            <ScrollButton up />
            <div className="mt-[153px] h-[77px] border border-[#bbb] bg-white" />
            <div className="mt-auto">
              <ScrollButton />
            </div>
          </div>
          <div className="flex w-[19px] flex-col items-center gap-3 pt-1.5">
            <button type="button" aria-label="前のスライド">
              <Triangle up />
              <Triangle up />
            </button>
            <button type="button" aria-label="次のスライド">
              <Triangle />
              <Triangle />
            </button>
          </div>
        </div>

        <FormatPane />
      </main>
    </div>
  );
}
